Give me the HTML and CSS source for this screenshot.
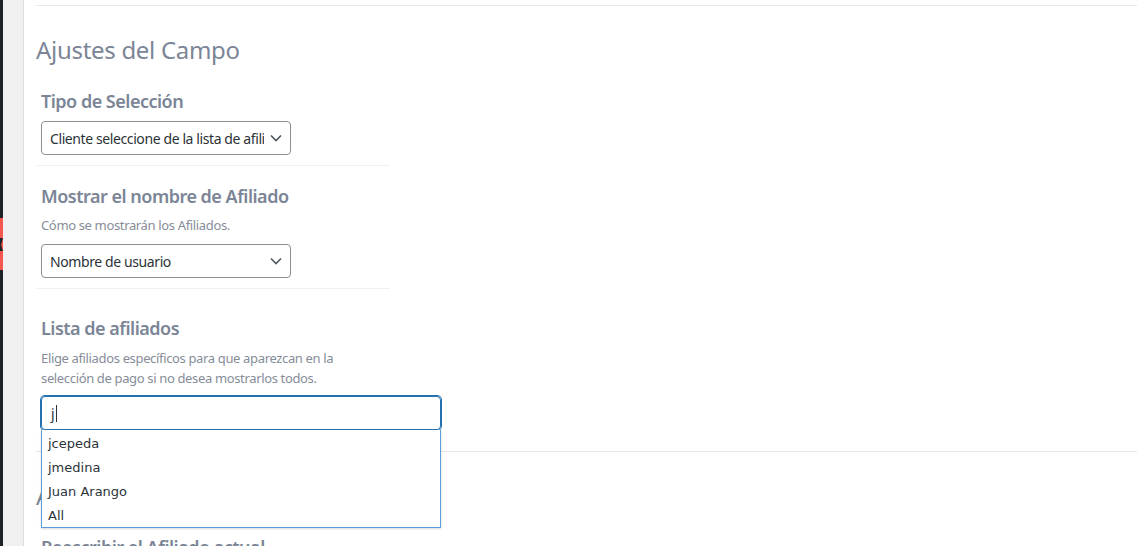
FILE: index.html
```html
<!DOCTYPE html>
<html>
<head>
  <meta charset="utf-8">
  <meta name="viewport" content="width=device-width">
  <title>Ajustes del Campo</title>
  <link rel="stylesheet" href="styles.css">
</head>
<body>
  <div class="edge">
    <svg class="edge-mark" width="3" height="52" viewBox="0 0 3 52">
      <rect x="0" y="0" width="3" height="20" fill="#f5574f"/>
      <polygon points="3,20 3,33 1,27" fill="#f5574f"/>
      <rect x="0" y="33" width="3" height="19" fill="#f5574f"/>
    </svg>
  </div>
  <div class="gutter"></div>
  <div class="main">
    <div class="section">
      <h2 class="section-title">Ajustes del Campo</h2>
      <div class="fields">
        <div class="field">
          <div class="field-label">Tipo de Selección</div>
          <div class="select">
            <span class="select-text">Cliente seleccione de la lista de afiliados</span>
            <svg class="chevron" width="12" height="8" viewBox="0 0 12 8"><polyline points="1,1.5 6,6.5 11,1.5" fill="none" stroke="#50575e" stroke-width="1.6"/></svg>
          </div>
        </div>
        <div class="field">
          <div class="field-label">Mostrar el nombre de Afiliado</div>
          <div class="field-desc">Cómo se mostrarán los Afiliados.</div>
          <div class="select">
            <span class="select-text">Nombre de usuario</span>
            <svg class="chevron" width="12" height="8" viewBox="0 0 12 8"><polyline points="1,1.5 6,6.5 11,1.5" fill="none" stroke="#50575e" stroke-width="1.6"/></svg>
          </div>
        </div>
        <div class="field field-last">
          <div class="field-label">Lista de afiliados</div>
          <div class="field-desc">Elige afiliados específicos para que aparezcan en la selección de pago si no desea mostrarlos todos.</div>
          <div class="search">
            <div class="search-input">j<span class="caret"></span></div>
            <ul class="results">
              <li>jcepeda</li>
              <li>jmedina</li>
              <li>Juan Arango</li>
              <li>All</li>
            </ul>
          </div>
        </div>
      </div>
    </div>
    <div class="section">
      <h2 class="section-title">Ajustes del Afiliado</h2>
      <div class="fields">
        <div class="field">
          <div class="field-label">Reescribir el Afiliado actual</div>
        </div>
      </div>
    </div>
  </div>
</body>
</html>
```

FILE: styles.css
```css
body {
  margin: 0;
  padding: 0;
  display: flex;
  height: 546px;
  overflow: hidden;
  font-family: "Noto Sans", "Open Sans", sans-serif;
  background: #fff;
}

.edge {
  width: 3px;
  background: #1d2327;
  flex-shrink: 0;
}

.edge-mark {
  display: block;
  margin-top: 218px;
}

.gutter {
  width: 20px;
  background: #f0f0f1;
  border-right: 1px solid #dcdcde;
  flex-shrink: 0;
}

.main {
  flex: 1;
  padding: 5px 0 0 12px;
}

.section {
  border-top: 1px solid #e8e8e8;
}

.section-title {
  margin: 28px 0 0 0;
  font-size: 24px;
  line-height: 32px;
  font-weight: 400;
  letter-spacing: -0.3px;
  color: #7b8596;
}

.fields {
  width: 354px;
  margin-top: 23px;
}

.field {
  padding: 0 5px 10px;
  border-bottom: 1px solid #f0f0f1;
  margin-bottom: 18px;
}

.field-last {
  border-bottom: none;
  margin-bottom: 0;
  padding-top: 9px;
  padding-bottom: 21px;
}

.field-label {
  font-size: 18px;
  line-height: 24px;
  font-weight: 600;
  letter-spacing: -0.5px;
  color: #7b8596;
}

.field-desc {
  margin-top: 7px;
  font-size: 13px;
  line-height: 20px;
  letter-spacing: -0.35px;
  color: #868d99;
}

.field-last .field-desc {
  margin-top: 8px;
}

.select {
  margin-top: 9px;
  width: 250px;
  height: 34px;
  box-sizing: border-box;
  border: 1px solid #8c8f94;
  border-radius: 4px;
  display: flex;
  align-items: center;
  padding: 0 8px;
  gap: 6px;
}

.field:first-child .select {
  margin-top: 8px;
}

.select-text {
  flex: 1;
  overflow: hidden;
  white-space: nowrap;
  font-size: 14px;
  letter-spacing: -0.4px;
  color: #2c3338;
}

.chevron {
  flex-shrink: 0;
}

.search {
  position: relative;
  margin-top: 8px;
  width: 400px;
}

.search-input {
  height: 34px;
  box-sizing: border-box;
  border: 1px solid #2271b1;
  box-shadow: 0 0 0 1px #2271b1;
  border-radius: 4px;
  padding: 0 9px;
  display: flex;
  align-items: center;
  font-size: 14px;
  color: #2c3338;
}

.caret {
  display: inline-block;
  width: 1px;
  height: 17px;
  background: #2c3338;
  margin-left: 1px;
}

.results {
  position: absolute;
  top: 34px;
  left: 0;
  right: 0;
  margin: 0;
  padding: 1px 0 0;
  list-style: none;
  background: #fff;
  border: 1px solid #5b9dd9;
  border-top: none;
  box-shadow: 0 1px 2px rgba(0, 0, 0, 0.15);
  z-index: 2;
}

.results li {
  height: 24px;
  line-height: 26px;
  padding: 0 6px;
  font-family: "DejaVu Sans", sans-serif;
  font-size: 13px;
  color: #2c3338;
}
```
